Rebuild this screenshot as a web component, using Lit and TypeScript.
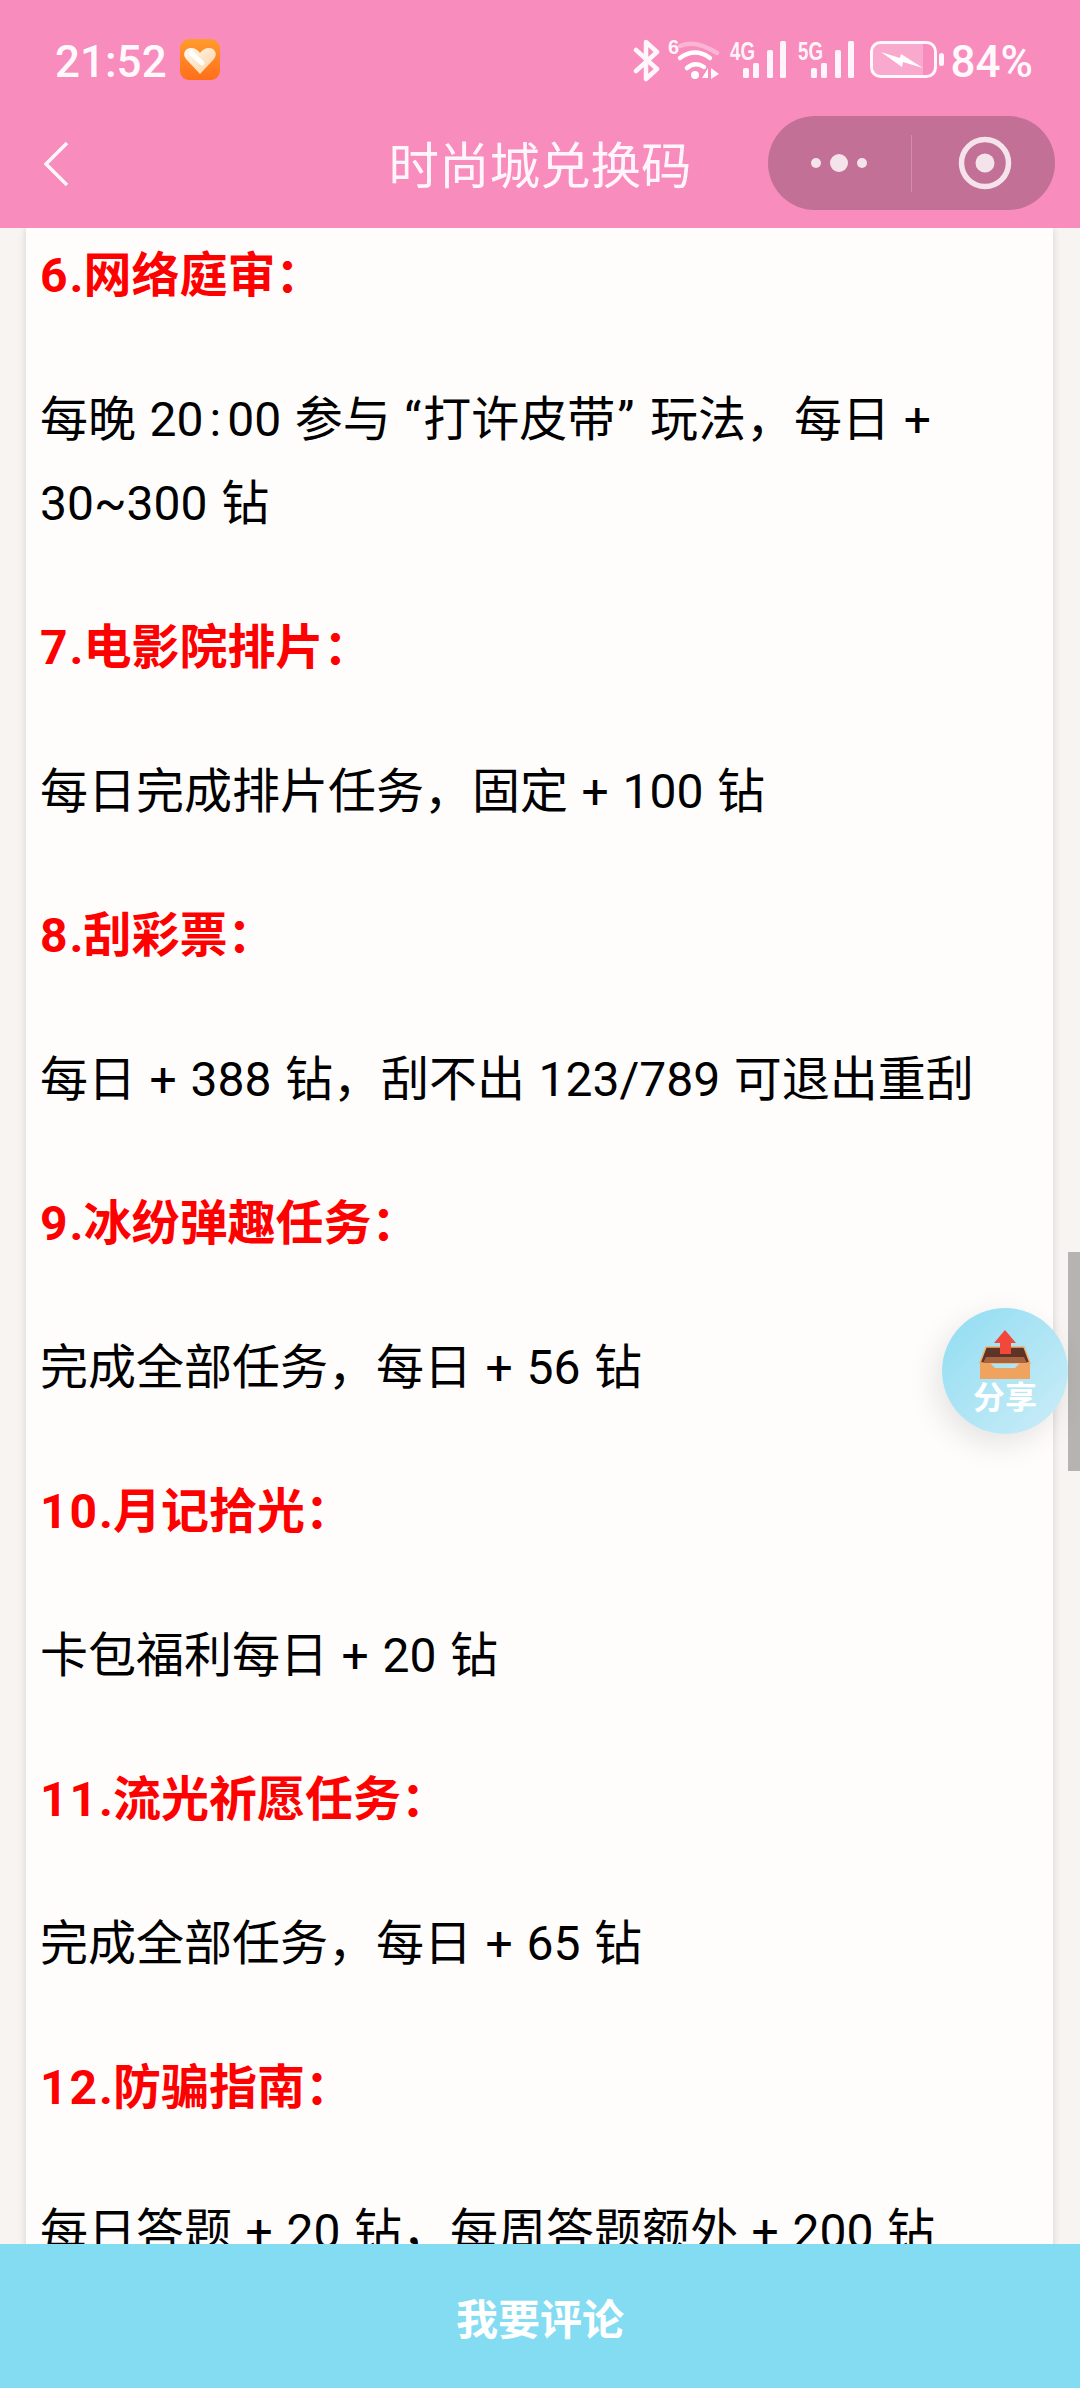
import { LitElement, html, css, svg } from "lit";
import { customElement } from "lit/decorators.js";

const SECTIONS = [
  ["6", "网络庭审：", html`每晚 20<span class="ratio">:</span>00 参与 <span class="q1">“</span>打许皮带<span class="q2">”</span> 玩法，每日 +<br />30~300 钻`],
  ["7", "电影院排片：", "每日完成排片任务，固定 + 100 钻"],
  ["8", "刮彩票：", "每日 + 388 钻，刮不出 123/789 可退出重刮"],
  ["9", "冰纷弹趣任务：", "完成全部任务，每日 + 56 钻"],
  ["10", "月记拾光：", "卡包福利每日 + 20 钻"],
  ["11", "流光祈愿任务：", "完成全部任务，每日 + 65 钻"],
  ["12", "防骗指南：", "每日答题 + 20 钻，每周答题额外 + 200 钻"],
];

const signal = (label: string) => svg`
  <text x="0" y="24" class="net" textLength="25" lengthAdjust="spacingAndGlyphs">${label}</text>
  <rect x="13" y="32" width="6" height="10" rx="1.500" fill="#fff" fill-opacity=".9"/>
  <rect x="23" y="27" width="6" height="15" rx="1.500" fill="#fff" fill-opacity=".9"/>
  <rect x="37" y="14" width="6" height="28" rx="1.500" fill="#fff" fill-opacity=".9"/>
  <rect x="50" y="5" width="6" height="37" rx="1.500" fill="#fff" fill-opacity=".9"/>`;

@customElement("app-root")
export class AppRoot extends LitElement {
  static styles = css`
    :host {
      display: flex;
      flex-direction: column;
      position: relative;
      width: 1080px;
      height: 2388px;
      overflow: hidden;
      background: #f7f4f1;
      font-family: Roboto, "Noto Sans CJK SC", sans-serif;
    }
    .top { background: #f78cbd; color: #fff; flex: none; }
    .status {
      height: 116px;
      display: flex;
      align-items: flex-start;
      justify-content: space-between;
      padding: 36px 47px 0 55px;
      box-sizing: border-box;
    }
    .left, .right { display: flex; align-items: flex-start; }
    .time { font-size: 44px; font-weight: 500; line-height: 1; color: #fff9fc; margin-top: 4px; }
    .heart { margin-left: 13px; margin-top: 3px; }
    .right svg { display: block; }
    .net { font: 700 25px "Liberation Sans", sans-serif; fill: #fff; fill-opacity: .92; }
    .six { font: 700 20px "Liberation Sans", sans-serif; fill: #fff; fill-opacity: .92; }
    .pct { font-size: 44px; font-weight: 500; line-height: 1; color: #fff9fc; margin-left: 6px; margin-top: 4px; }
    .nav {
      height: 112px;
      display: flex;
      align-items: flex-start;
      justify-content: space-between;
      padding: 0 25px 0 44px;
      position: relative;
    }
    .back { margin-top: 25px; }
    .title {
      position: absolute;
      left: 0; right: 0; top: 18px;
      text-align: center;
      font-size: 50.500px;
      line-height: 56px;
      font-family: "Noto Sans CJK SC", sans-serif;
      color: #fff5fa;
    }
    .capsule {
      width: 287px;
      height: 94px;
      border-radius: 47px;
      background: #c27095;
      display: block;
    }
    main {
      flex: 1;
      min-height: 0;
      overflow: hidden;
    }
    .card {
      margin-left: 26px;
      width: 1027px;
      box-sizing: border-box;
      padding: 6px 14px 0;
      background: #fffdfc;
      box-shadow: 0 0 8px rgba(0,0,0,.14);
      min-height: 100%;
    }
    h2, p { margin: 0 0 60px; font-size: 48px; line-height: 84px; color: #000; }
    h2 { color: #ff0000; font-weight: 700; }
    h2 .n { letter-spacing: 2px; }
    p { font-weight: 400; word-spacing: 1.700px; }
    .ratio { margin: 0 6px; }
    .q1 { margin-right: 2px; }
    .q2 { margin-left: 2px; margin-right: 2px; }
    footer {
      flex: none;
      height: 144px;
      background: #83dcf2;
      color: #fff;
      display: flex;
      align-items: center;
      justify-content: center;
      font-size: 42px;
      font-weight: 700;
      font-family: "Noto Sans CJK SC", sans-serif;
      position: relative;
    }
    .scrollbar {
      position: absolute;
      left: 1068px; top: 1252px;
      width: 12px; height: 219px;
      background: #b5b4b2;
    }
    .share {
      position: absolute;
      left: 942px; top: 1308px;
      width: 126px; height: 126px;
      border-radius: 50%;
      background: linear-gradient(135deg, #90dcf2, #ccedf7);
      box-shadow: -6px 10px 30px rgba(0,0,0,.1);
      display: flex;
      flex-direction: column;
      align-items: center;
      color: #fff;
      font: 700 32px/36px "Noto Sans CJK SC", sans-serif;
    }
    .share svg { margin-top: 22px; display: block; flex: none; }
    .share span { margin-top: -2px; }
  `;

  render() {
    return html`
      <div class="top">
        <div class="status">
          <div class="left">
            <span class="time">21:52</span>
            <svg class="heart" width="40" height="41" viewBox="0 0 40 41">
              <defs>
                <linearGradient id="o" x1="0" y1="0" x2="0" y2="1"><stop offset="0" stop-color="#ff9b2e"/><stop offset="1" stop-color="#ff6f1a"/></linearGradient>
                <linearGradient id="h" x1="0" y1="0" x2="1" y2="1"><stop offset="0" stop-color="#fffaf4"/><stop offset="1" stop-color="#fbd09c"/></linearGradient>
              </defs>
              <rect width="40" height="41" rx="9" fill="url(#o)"/>
              <path d="M20 35 L6 20 C2 15 5 9 11 9 C15 9 18 11 20 14 C22 11 25 9 29 9 C35 9 38 15 34 20 Z" fill="url(#h)"/>
              <path d="M11 14 L22 24" stroke="#fff" stroke-width="5" stroke-linecap="round"/>
            </svg>
          </div>
          <div class="right">
            <svg width="312" height="46" viewBox="0 0 312 46">
              <path d="M3 14 L24 33 L13 43 L13 6 L24 16 L3 35" fill="none" stroke="#fff" stroke-opacity=".93" stroke-width="4.500" stroke-linejoin="round" stroke-linecap="round"/>
              <text x="35" y="18" class="six">6</text>
              <path d="M47 10 Q62 3 84 17" fill="none" stroke="#fff" stroke-opacity=".35" stroke-width="4.500" stroke-linecap="round"/>
              <path d="M47 22 Q62 11 77 22" fill="none" stroke="#fff" stroke-width="4.500" stroke-linecap="round"/>
              <path d="M54 32 Q62 25 71 31" fill="none" stroke="#fff" stroke-width="4.500" stroke-linecap="round"/>
              <circle cx="62" cy="39" r="4" fill="#fff"/>
              <path d="M75 32 V42 H69Z M78 32 L86 38 L78 43Z" fill="#fff" fill-opacity=".95"/>
              <g transform="translate(97,0)">${signal("4G")}</g>
              <g transform="translate(165,0)">${signal("5G")}</g>
              <path d="M240 15 a7 7 0 0 1 7 -7 H290 V39 H247 a7 7 0 0 1 -7 -7Z" fill="#fff" fill-opacity=".25"/>
              <rect x="238.500" y="6.500" width="64" height="34" rx="9" fill="none" stroke="#fff" stroke-opacity=".93" stroke-width="3"/>
              <path d="M248 16 L267 22 L268 18 L290 32 L270 26 L269 31 Z" fill="#fff"/>
              <rect x="306" y="17" width="5" height="13" rx="2.500" fill="#fff" fill-opacity=".93"/>
            </svg>
            <span class="pct">84%</span>
          </div>
        </div>
        <div class="nav">
          <svg class="back" width="26" height="46" viewBox="0 0 26 46">
            <path d="M23 2 L2 23 L23 44" fill="none" stroke="#fff5fa" stroke-width="3.600"/>
          </svg>
          <div class="title">时尚城兑换码</div>
          <svg class="capsule" viewBox="0 0 287 94">
            <circle cx="48" cy="47" r="5" fill="#f5e3ec"/>
            <circle cx="71" cy="47" r="9" fill="#f5e3ec"/>
            <circle cx="94" cy="47" r="5" fill="#f5e3ec"/>
            <rect x="143" y="19" width="1" height="57" fill="#d18bab"/>
            <circle cx="217" cy="47" r="23.500" fill="none" stroke="#f5e3ec" stroke-width="5.500"/>
            <circle cx="217" cy="47" r="9.500" fill="#f5e3ec"/>
          </svg>
        </div>
      </div>
      <main>
        <div class="card">
          ${SECTIONS.map(([n, h, t]) => html`<h2><span class="n">${n}</span>.${h}</h2><p>${t}</p>`)}
        </div>
      </main>
      <footer>我要评论</footer>
      <div class="scrollbar"></div>
      <div class="share">
        <svg width="52" height="49" viewBox="0 0 52 49">
          <path d="M7 17 H45 L51 33 H1 Z" fill="#5e3426" stroke="#f0b070" stroke-width="1.500"/>
          <path d="M4 33 L7 27 H45 L48 33 Z" fill="#a8623d"/>
          <path d="M26 0 L37 13 H32 V24 H21 V13 H15 Z" fill="#f4473c"/>
          <path d="M1 33 H11 L16 38 H36 L41 33 H51 V49 H1 Z" fill="#f0a35e"/>
        </svg>
        <span>分享</span>
      </div>
    `;
  }
}
